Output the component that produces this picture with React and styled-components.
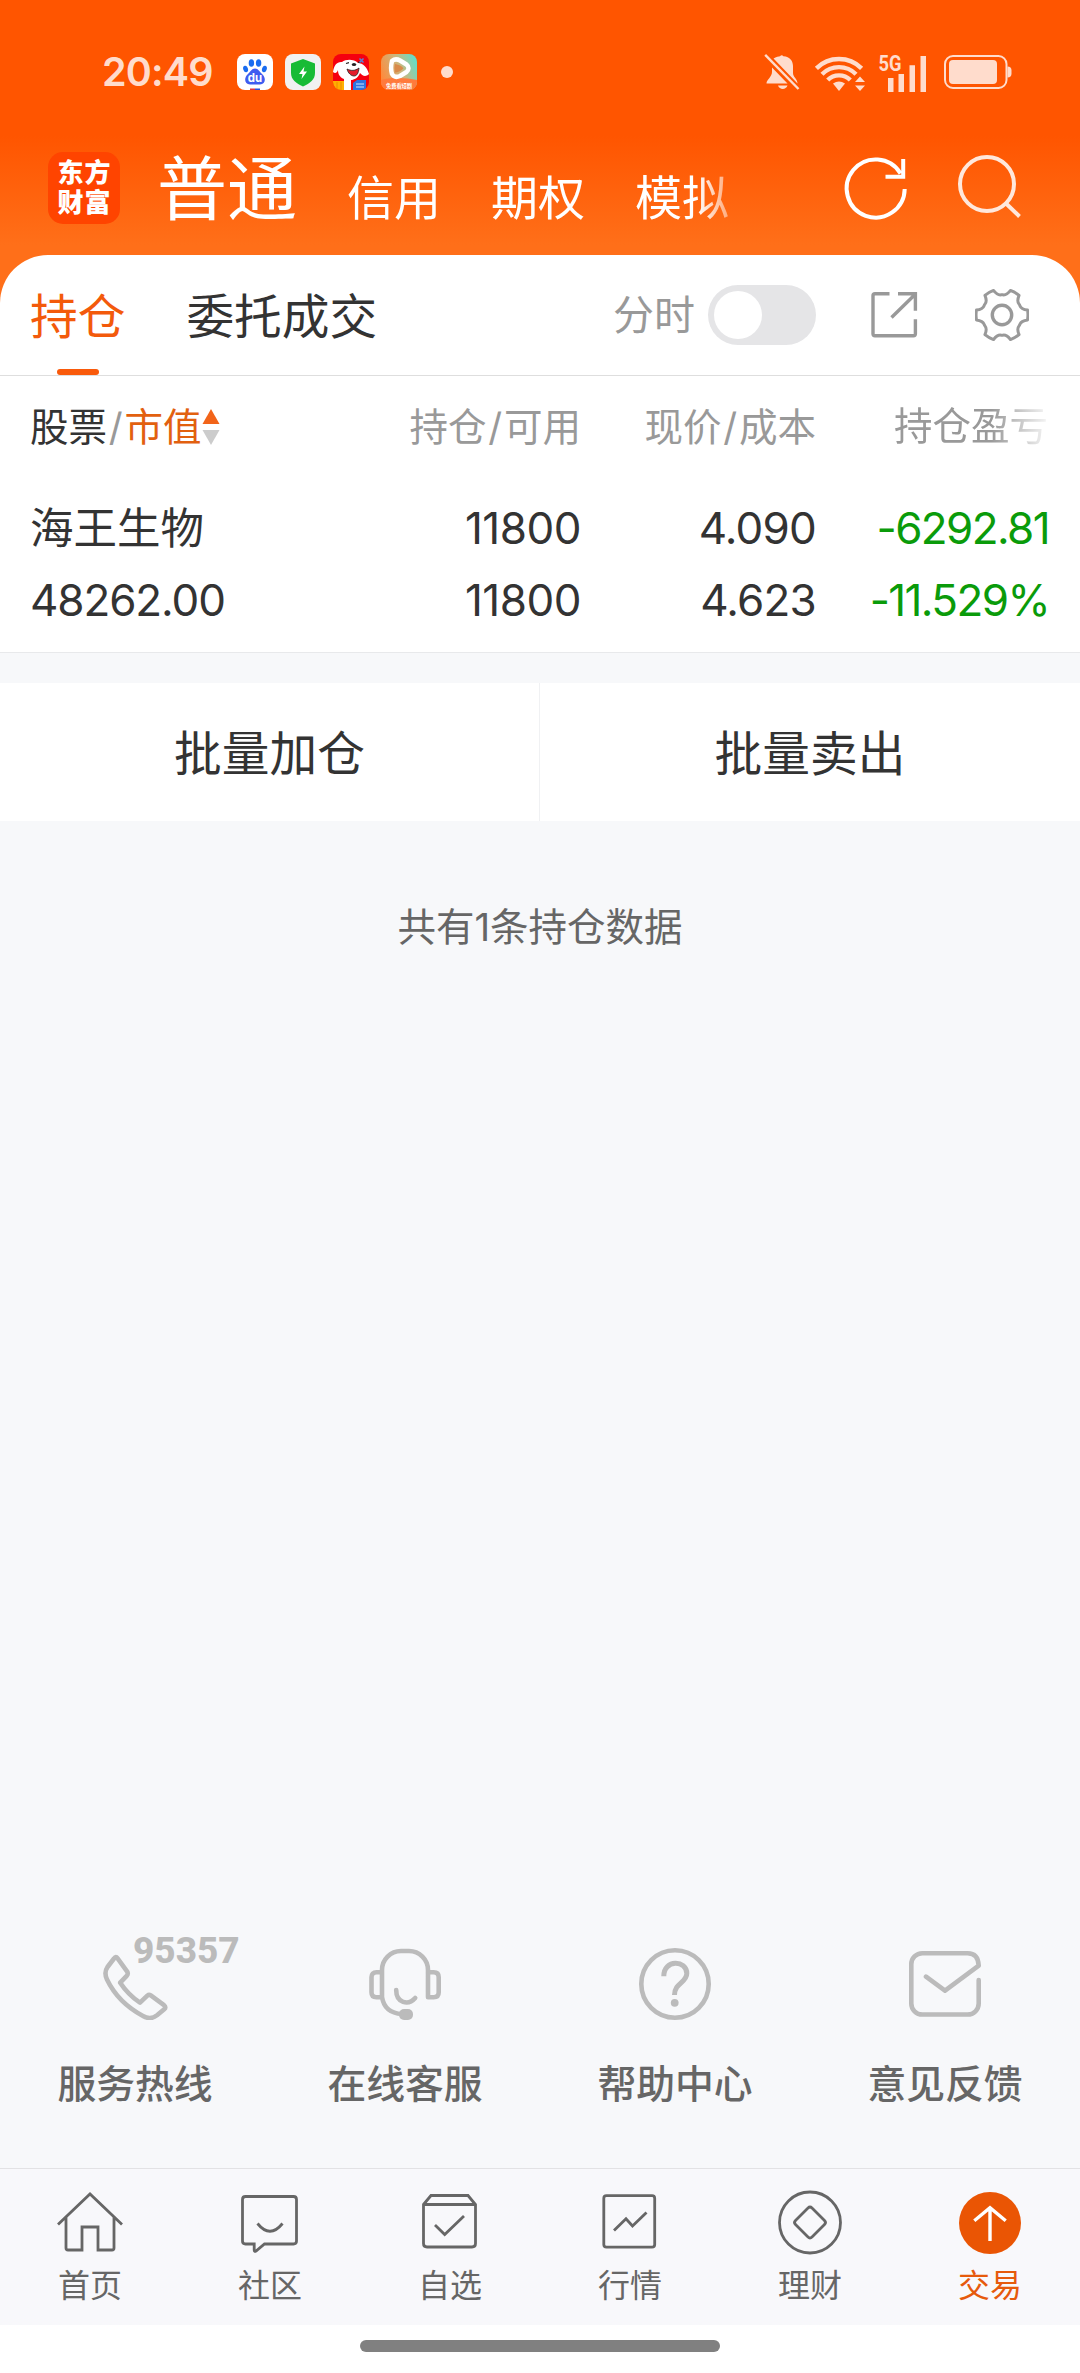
import React, { useState } from "react";
import styled, { createGlobalStyle } from "styled-components";

const GlobalStyle = createGlobalStyle`
  * {
    box-sizing: border-box;
  }
  body {
    margin: 0;
    background: #f7f8fa;
    font-family: Inter, "Noto Sans CJK SC", sans-serif;
    color: #333;
  }
`

const Page = styled.main`
  display: flex;
  flex-direction: column;
  width: 1080px;
  height: 2373px;
  overflow: hidden;
  background: #f7f8fa;
`

const Top = styled.header`
  height: 303px;
  flex: none;
  background: linear-gradient(#ff5500 0, #ff5500 136px, #ff6f19 245px, #ff6f19 100%);
`

const StatusBar = styled.div`
  display: flex;
  align-items: center;
  height: 144px;
  padding: 0 68px 0 102px;
  color: #ffdccc;
`

const Clock = styled.span`
  width: 135px;
  font-size: 39.5px;
  font-weight: 600;
  letter-spacing: -0.8px;
`

const AppIcons = styled.div`
  display: flex;
  gap: 12px;
  flex: 1;
`

const MoreDot = styled.i`
  width: 12px;
  height: 12px;
  margin: 12px 0 0 12px;
  border-radius: 50%;
  background: #ffdccc;
`

const Signals = styled.div`
  display: flex;
  align-items: center;
`

const AccountBar = styled.div`
  display: flex;
  align-items: center;
  height: 88px;
  padding: 0 56px 0 48px;
  color: #fff;
`

const Logo = styled.div`
  display: grid;
  grid-template-columns: 27px 27px;
  justify-content: center;
  align-content: center;
  width: 72px;
  height: 72px;
  margin-right: 37px;
  border-radius: 15px;
  background: #ff4400;
  font-size: 26px;
  font-weight: 900;
  line-height: 30px;
  text-align: center;
`

const Accounts = styled.nav`
  display: flex;
  align-items: baseline;
  gap: 50px;
  flex: 1;
  padding-top: 12px;
  mask-image: linear-gradient(90deg, #000 540px, transparent 597px);
`

const Account = styled.span`
  font-size: ${props => props.$active ? "70px" : "47px"};
  line-height: 88px;
  white-space: nowrap;
`

const HeadIcons = styled.div`
  display: flex;
  gap: 40px;
`

const Sheet = styled.section`
  flex: none;
  height: 398px;
  margin-top: -48px;
  border-radius: 48px 48px 0 0;
  border-bottom: 1px solid #e8e9eb;
  background: #fff;
`

const TabBar = styled.div`
  display: flex;
  align-items: center;
  height: 121px;
  padding: 0 51px 0 30px;
  border-bottom: 1px solid #dedede;
`

const Tab = styled.div`
  display: flex;
  flex-direction: column;
  align-items: center;
  justify-content: space-between;
  height: 120px;
  margin-right: 61px;
  padding-top: 31px;
  font-size: 47.7px;
  line-height: 62px;
  color: ${props => props.$active ? "#f35a0b" : "#333"};
  &::after {
    content: "";
    width: 42px;
    height: 6px;
    border-radius: 3px;
    background: ${props => props.$active ? "#f95a0b" : "transparent"};
  }
`

const Tools = styled.div`
  display: flex;
  align-items: center;
  margin-left: auto;
  color: #999;
`

const ToolLabel = styled.span`
  margin-right: 13px;
  font-size: 41px;
  line-height: 58px;
`

const Switch = styled.button`
  display: flex;
  justify-content: ${props => props.$on ? "flex-end" : "flex-start"};
  width: 108px;
  height: 60px;
  margin-right: 51px;
  padding: 6px;
  border: 0;
  border-radius: 30px;
  background: ${props => props.$on ? "#f35a0b" : "#e5e5e7"};
  &::after {
    content: "";
    width: 48px;
    height: 48px;
    border-radius: 50%;
    background: #fff;
  }
`

const Columns = styled.div`
  display: grid;
  grid-template-columns: 300px 251px 235px 233px;
  padding-left: 30px;
`

const HeadRow = styled(Columns)`
  height: 101px;
  line-height: 100px;
  font-size: 38.5px;
  color: #999;
`

const HeadCell = styled.span`
  display: flex;
  align-items: center;
  justify-content: ${props => props.$first ? "flex-start" : "flex-end"};
  white-space: nowrap;
`

const FadeCell = styled.span`
  padding-left: 78px;
  white-space: nowrap;
  overflow: hidden;
  mask-image: linear-gradient(90deg, #000 175px, transparent 238px);
`

const Dark = styled.span`
  color: #333;
`

const SortKey = styled.span`
  color: #e2600f;
`

const Slash = styled.span`
  padding: 0 1.8px;
`

const Rows = styled(Columns)`
  padding-top: 15px;
`

const Cell = styled.div`
  text-align: ${props => props.$first ? "left" : "right"};
  font-size: 44px;
  line-height: 72px;
  letter-spacing: ${props => props.$tracking || "-0.8px"};
  white-space: nowrap;
  color: ${props => props.$down ? "#0a9b0a" : "#333"};
`

const StockName = styled.div`
  letter-spacing: 0;
  font-size: 43.5px;
`

const BatchBar = styled.div`
  display: grid;
  grid-template-columns: 1fr 1fr;
  flex: none;
  height: 138px;
  margin-top: 30px;
  background: #fff;
`

const BatchButton = styled.button`
  padding: 0 0 4px;
  border: 0;
  border-right: ${props => props.$divided ? "1px solid #f0f1f3" : "0"};
  background: none;
  font-family: inherit;
  font-size: 47.7px;
  color: #333;
`

const Summary = styled.p`
  flex: 1;
  margin: 0;
  padding-top: 78px;
  text-align: center;
  font-size: 38.5px;
  line-height: 56px;
  color: #666;
`

const Services = styled.div`
  display: grid;
  grid-template-columns: repeat(4, 1fr);
  height: 220px;
`

const Service = styled.div`
  position: relative;
  display: flex;
  flex-direction: column;
  align-items: center;
  gap: 34px;
  font-size: 38.8px;
  font-weight: 500;
  line-height: 60px;
  color: #666;
`

const Hotline = styled.span`
  position: absolute;
  left: 133px;
  top: -25px;
  font-family: Roboto, sans-serif;
  font-size: 37px;
  font-weight: 800;
  line-height: 56px;
  color: #bbb;
`

const BottomNav = styled.nav`
  display: grid;
  grid-template-columns: repeat(6, 1fr);
  flex: none;
  height: 157px;
  border-top: 1px solid #e2e2e4;
  background: #f8f8fb;
`

const NavItem = styled.div`
  display: flex;
  flex-direction: column;
  align-items: center;
  padding-top: 17px;
  font-size: 32px;
  line-height: 56px;
  color: ${props => props.$active ? "#e65a0c" : "#666"};
`

const GestureArea = styled.footer`
  display: flex;
  justify-content: center;
  flex: none;
  height: 48px;
  padding-top: 15px;
  background: #fff;
  &::after {
    content: "";
    width: 360px;
    height: 12px;
    border-radius: 6px;
    background: #808080;
  }
`

const Drawing = styled.svg`
  display: block;
  flex: none;
  fill: none;
  stroke: ${props => props.$color || "currentColor"};
  stroke-width: ${props => props.$weight || 3};
`

const GearDrawing = styled(Drawing)`
  margin-left: 54px;
`

const FlatIcon = styled.svg`
  display: block;
  flex: none;
`

// outline of the settings gear: six teeth with concave gaps between them
const gearPath = () => {
  const at = (deg, r) => {
    const a = deg * Math.PI / 180
    return `${(27 + r * Math.cos(a)).toFixed(2)} ${(27 + r * Math.sin(a)).toFixed(2)}`
  }
  let d = `M${at(-11, 26)}`
  for (let k = 0; k < 6; k++) {
    const t = k * 60
    d += `Q${at(t, 26.4)} ${at(t + 11, 26)}`
    d += `C${at(t + 18, 19)} ${at(t + 25, 20.3)} ${at(t + 30, 20.3)}`
    d += `C${at(t + 35, 20.3)} ${at(t + 42, 19)} ${at(t + 49, 26)}`
  }
  return d + "Z"
}

const Baidu = () => (
  <FlatIcon width="36" height="36" viewBox="0 0 36 36">
    <rect width="36" height="36" rx="8" fill="#fff" />
    <g fill="#1a6cf0">
      <ellipse cx="8.6" cy="15" rx="2.4" ry="3.3" transform="rotate(-15 8.6 15)" />
      <ellipse cx="14.4" cy="9" rx="2.7" ry="3.8" />
      <ellipse cx="21.6" cy="9" rx="2.7" ry="3.8" />
      <ellipse cx="27.4" cy="15" rx="2.4" ry="3.3" transform="rotate(15 27.4 15)" />
    </g>
    <path d="M18 14.5c3.400 0 4.500 3.200 7 5.500 4.500 4 3.500 10.500-2 10.500H13c-5.500 0-6.500-6.500-2-10.500 2.500-2.300 3.600-5.500 7-5.500z" fill="#3f5cf0" />
    <text x="18" y="28.200" fontSize="11.500" fontWeight="700" fill="#fff" textAnchor="middle">du</text>
    <path d="M13 34.500h5V36h-5z" fill="#e2333c" />
    <path d="M18 34.500h5V36h-5z" fill="#2d4fd8" />
  </FlatIcon>
)

const Shield = () => (
  <FlatIcon width="36" height="36" viewBox="0 0 36 36">
    <rect width="36" height="36" rx="8" fill="#f1f1f1" />
    <path d="M18 5l12 4.500V19c0 6.500-5 10.500-12 13.500C11 29.500 6 25.500 6 19V9.500z" fill="#17bb35" />
    <path d="M19.500 12.500l-5.500 7.500h3.500l-1 5 5.500-7.500h-3.500z" fill="#fff" />
  </FlatIcon>
)

const Mascot = () => (
  <FlatIcon width="36" height="36" viewBox="0 0 36 36">
    <clipPath id="mascot"><rect width="36" height="36" rx="8" /></clipPath>
    <g clipPath="url(#mascot)">
      <path d="M0 0h36v36H0z" fill="#f5000f" />
      <path d="M0 18C1 11 4 7.500 9 8c4-3 12-3 16 1 5 0 9 4 11 11-4 4-7 1-9-1-2 5-6 7-9 7v10h-7V25c-5-2-6-6-6-9-1 3-3 4-5 2z" fill="#fff" />
      <path d="M14 15c4 2 8 2 12-1-.5 5-2 8-5 8s-6-3-7-7z" fill="#e31d2b" stroke="#222" strokeWidth="0.800" />
      <ellipse cx="21" cy="10.500" rx="2.200" ry="1.500" fill="#222" />
      <path d="M13 9.500l3-.8M25 8l2.500.8" stroke="#222" strokeWidth="1.200" />
      <path d="M0 27h11v9H0z" fill="#ffb000" />
      <path d="M4 28v8M8 28v8" stroke="#f08a00" />
      <path d="M20 29l4-3h9v10H20z" fill="#2d74e0" />
      <path d="M23 30h8M23 33h8" stroke="#cfe3ff" />
      <path d="M26.500 4.500l4 4M30.500 4.500l-4 4" stroke="#5d7fd0" strokeWidth="1.600" />
    </g>
  </FlatIcon>
)

const Video = () => (
  <FlatIcon width="36" height="36" viewBox="0 0 36 36">
    <defs>
      <linearGradient id="video" x1="0" y1="0.600" x2="1" y2="0.200">
        <stop offset="0" stopColor="#ff8a3c" />
        <stop offset="0.550" stopColor="#c9b880" />
        <stop offset="1" stopColor="#5fe0cc" />
      </linearGradient>
    </defs>
    <rect width="36" height="36" rx="8" fill="url(#video)" />
    <path d="M0 26c10-3 26-2 36 0v2a8 8 0 0 1-8 8H8a8 8 0 0 1-8-8z" fill="#ff7a3c" />
    <path d="M11 7q3.500-3 8-.5l6.500 4q4 3.500 0 7.500l-6.500 4q-5.500 2.500-8-2-1.800-6 0-13z" fill="none" stroke="#fff" strokeWidth="4.500" strokeLinejoin="round" />
    <path d="M14 10q6 1 8.500 4.200-2.500 3.300-8.500 4.300-1-4.300 0-8.500z" fill="#d98a4a" />
    <text x="18" y="34" fontSize="5.200" fontWeight="700" fill="#fff" textAnchor="middle">免费看短剧</text>
  </FlatIcon>
)

const StatusSignals = () => (
  <Signals>
    <FlatIcon width="49" height="40" viewBox="0 0 49 40" fill="#ffdccc">
      <path d="M10.500 6.500C13 4.500 16 4.500 17 4.200q1.700-1.800 3.400 0C27 4.500 30 9 30 14v7c0 4 4.500 6 4.500 10.500z" />
      <path d="M9 15.500L24.500 31.500H3.500C3.500 27.500 9 25 9 20z" />
      <path d="M15 33.500h9.500c-1.500 4.500-8 4.500-9.500 0z" />
      <path d="M2.200 2.800L35.500 37" stroke="#ffdccc" strokeWidth="2.400" />
    </FlatIcon>
    <FlatIcon width="66" height="42" viewBox="0 0 66 42" fill="none" stroke="#ffdccc" strokeWidth="4.400">
      <path d="M4.400 17.400a32 32 0 0 1 45.200 0M10 23.200a24 24 0 0 1 34 0M15.700 29a16 16 0 0 1 22.600 0" />
      <path d="M21 32.500q6-4 12 0l-6 7.500z" fill="#ffdccc" stroke="none" />
      <path d="M43 31l5-5.500 5 5.500zM43 34.500l5 5.500 5-5.500z" fill="#ffdccc" stroke="none" />
    </FlatIcon>
    <FlatIcon width="66" height="40" viewBox="0 0 66 40" fill="#ffdccc">
      <text x="0.500" y="18.500" fontFamily="Roboto" fontSize="22" fontWeight="700" textLength="23" lengthAdjust="spacingAndGlyphs">5G</text>
      <path d="M10 26h5.500v14H10zM20.500 22h5.500v18h-5.500zM31.500 13.300h5.500V40h-5.500zM42.500 4h5.500v36h-5.500z" />
    </FlatIcon>
    <FlatIcon width="68" height="36" viewBox="0 0 68 36" fill="#ffdccc">
      <rect x="1" y="2" width="61.500" height="32" rx="8" fill="none" stroke="#ffdccc" strokeWidth="2" />
      <rect x="5" y="6" width="48" height="24" rx="4" />
      <path d="M63.500 12.500q4 0 4 4v3q0 4-4 4z" />
    </FlatIcon>
  </Signals>
)

const services = [
  {
    label: "服务热线",
    note: "95357",
    icon: <path d="M15 10.500q1.800-2.600 3.600-.2L28 23.300q1.600 2.600-.3 4.500L21.200 34.700Q29 46.500 41 54.700l7.600-7.300q1.400-1.200 3.200 0L65 57.200q2.500 2.100.2 4.100L58 67.300q-6.500 5-14 .7Q19 54.500 8 31.500 4.700 24.500 8.500 19z" strokeLinejoin="round" />
  },
  {
    label: "在线客服",
    icon: <>
      <path d="M13 24.300H7.500q-5 0-5 5v14.900q0 5 5 5H13M59 24.300h5.700q5 0 5 5v14.900q0 5-5 5H59V22A19 19 0 0 0 40 3h-8A19 19 0 0 0 13 22v27q2.500 16 20 17" strokeLinejoin="round" />
      <path d="M27.200 42c0 13 12 16 19 8" strokeLinecap="round" />
      <rect x="30" y="61" width="14" height="11" rx="5" fill="#bbb" stroke="none" />
    </>
  },
  {
    label: "帮助中心",
    icon: <>
      <circle cx="36" cy="36" r="33.700" />
      <path d="M24.800 28.200C24.800 11 47.800 12 47.800 25.500c0 9-12.300 9.500-12.300 21.500" strokeWidth="5" />
      <circle cx="35.700" cy="54.800" r="3.900" fill="#bbb" stroke="none" />
    </>
  },
  {
    label: "意见反馈",
    icon: <path d="M69.700 32v23.500a11 11 0 0 1-11 11H13.300a11 11 0 0 1-11-11V16.200a11 11 0 0 1 11-11h45.400q10.500 0 11 12.500L36 42.700 17 28.700" strokeLinecap="round" strokeLinejoin="round" />
  },
]

const navItems = [
  {
    label: "首页",
    icon: <path d="M4 38.500L36 8l32 30.500M12 31.500V62q0 2 2 2h14V41h16v23h14q2 0 2-2V31.500" />
  },
  {
    label: "社区",
    icon: <path d="M11.500 10.500h48q3 0 3 3V55q0 3-3 3H30.500L22 65q-1.800 1-1.800-1v-6h-8.700q-3 0-3-3V13.500q0-3 3-3zM23.500 37.500q12.500 15.500 25 0" />
  },
  {
    label: "自选",
    icon: <path d="M9.500 18.500L17 9.500h37l7.500 9v39q0 3.500-3.500 3.500H13q-3.500 0-3.500-3.500zh52M21 39l9.700 9.500L50 30" />
  },
  {
    label: "行情",
    icon: <path d="M12.500 9.700h45.500q2.700 0 2.700 2.700v46q0 2.700-2.700 2.700H12.500q-2.700 0-2.700-2.700v-46q0-2.700 2.700-2.700zM20 44.500l12-11.800 6.500 7.300L52.500 26.500" />
  },
  {
    label: "理财",
    icon: <>
      <circle cx="36" cy="36.500" r="30.500" />
      <path d="M34 22q2-2 4 0l12.500 12.500q2 2 0 4L38 51q-2 2-4 0L21.500 38.500q-2-2 0-4z" />
    </>
  },
  {
    label: "交易",
    active: true,
    icon: <>
      <circle cx="36" cy="37" r="31" fill="#ea5504" stroke="none" />
      <path d="M36 22v33M20.300 34.800L36 21.800l15.700 13" stroke="#fff" strokeWidth="3.400" />
    </>
  },
]

export default function App() {
  const [minuteChart, setMinuteChart] = useState(false)

  return (
    <Page>
      <GlobalStyle />
      <Top>
        <StatusBar>
          <Clock>20:49</Clock>
          <AppIcons>
            <Baidu />
            <Shield />
            <Mascot />
            <Video />
            <MoreDot />
          </AppIcons>
          <StatusSignals />
        </StatusBar>
        <AccountBar>
          <Logo>
            <span>东</span><span>方</span>
            <span>财</span><span>富</span>
          </Logo>
          <Accounts>
            <Account $active>普通</Account>
            <Account>信用</Account>
            <Account>期权</Account>
            <Account>模拟</Account>
          </Accounts>
          <HeadIcons>
            <Drawing width="72" height="72" viewBox="0 0 72 72" $weight={4}>
              <path d="M64.700 37A29 29 0 1 1 60.500 21.500M63.200 7v17.700H45.500" />
            </Drawing>
            <Drawing width="72" height="72" viewBox="0 0 72 72" $color="#ffe8dc" $weight={4}>
              <circle cx="35" cy="32" r="27" />
              <path d="M53.500 51L67.500 64.500" />
            </Drawing>
          </HeadIcons>
        </AccountBar>
      </Top>

      <Sheet>
        <TabBar>
          <Tab $active>持仓</Tab>
          <Tab>委托成交</Tab>
          <Tools>
            <ToolLabel>分时</ToolLabel>
            <Switch $on={minuteChart} onClick={() => setMinuteChart(!minuteChart)} />
            <Drawing width="54" height="54" viewBox="0 0 54 54" $weight={3.4}>
              <path d="M22.500 5.700H8q-2 0-2 2v38q0 2 2 2h38.400q2 0 2-2V31.300M31 5.700h17.400v17M24.500 29.500L48 6.500" />
            </Drawing>
            <GearDrawing width="54" height="54" viewBox="0 0 54 54" $weight={3}>
              <path d={gearPath()} strokeLinejoin="round" />
              <circle cx="27" cy="27" r="9.700" strokeWidth="3.400" />
            </GearDrawing>
          </Tools>
        </TabBar>
        <HeadRow>
          <HeadCell $first>
            <Dark>股票</Dark>
            <Slash>/</Slash>
            <SortKey>市值</SortKey>
            <FlatIcon width="18" height="36" viewBox="0 0 18 36">
              <path d="M9 0l8.500 15H.5z" fill="#f26419" />
              <path d="M9 36l8.500-15H.5z" fill="#ccc" />
            </FlatIcon>
          </HeadCell>
          <HeadCell>持仓<Slash>/</Slash>可用</HeadCell>
          <HeadCell>现价<Slash>/</Slash>成本</HeadCell>
          <FadeCell>持仓盈亏</FadeCell>
        </HeadRow>
        <Rows>
          <Cell $first $tracking="-1.1px">
            <StockName>海王生物</StockName>
            <div>48262.00</div>
          </Cell>
          <Cell $tracking="-0.5px">
            <div>11800</div>
            <div>11800</div>
          </Cell>
          <Cell>
            <div>4.090</div>
            <div>4.623</div>
          </Cell>
          <Cell $down $tracking="-1.6px">
            <div>-6292.81</div>
            <div>-11.529%</div>
          </Cell>
        </Rows>
      </Sheet>

      <BatchBar>
        <BatchButton $divided>批量加仓</BatchButton>
        <BatchButton>批量卖出</BatchButton>
      </BatchBar>

      <Summary>共有1条持仓数据</Summary>

      <Services>
        {services.map(item => (
          <Service key={item.label}>
            <Drawing width="72" height="72" viewBox="0 0 72 72" $color="#bbb" $weight={4.6}>{item.icon}</Drawing>
            {item.label}
            {item.note && <Hotline>{item.note}</Hotline>}
          </Service>
        ))}
      </Services>

      <BottomNav>
        {navItems.map(item => (
          <NavItem key={item.label} $active={item.active}>
            <Drawing width="72" height="72" viewBox="0 0 72 72" $color="#666" $weight={2.8}>{item.icon}</Drawing>
            {item.label}
          </NavItem>
        ))}
      </BottomNav>
      <GestureArea />
    </Page>
  )
}
